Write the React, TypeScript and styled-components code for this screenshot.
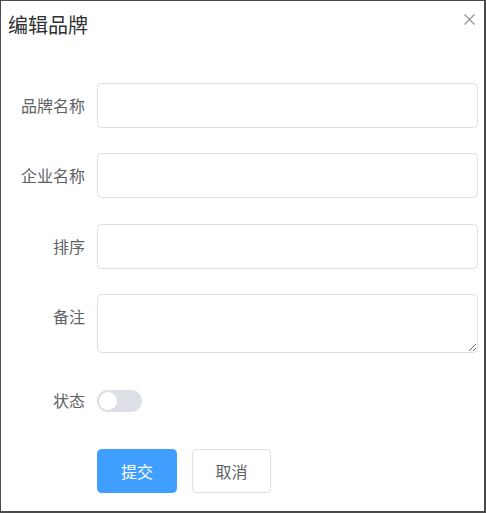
import * as React from 'react';
import styled, { createGlobalStyle } from 'styled-components';

const GlobalStyle = createGlobalStyle`
  html, body {
    margin: 0;
    padding: 0;
    background: #ffffff;
  }
  * {
    box-sizing: border-box;
  }
`;

const Dialog = styled.div`
  width: 486px;
  height: 513px;
  display: flex;
  flex-direction: column;
  background: #fff;
  border-style: solid;
  border-color: #4a4a4a;
  border-width: 1px 2px 2px 1px;
  font-family: "Noto Sans CJK SC", "Microsoft YaHei", sans-serif;
`;

const Header = styled.div`
  display: flex;
  justify-content: space-between;
  align-items: flex-start;
  height: 50px;
  padding: 12px 9px 0 7px;
`;

const Title = styled.span`
  font-size: 20px;
  line-height: 24px;
  color: #303133;
`;

const CloseButton = styled.button`
  margin-top: 1px;
  width: 11px;
  height: 11px;
  padding: 0;
  border: none;
  background: transparent;
  cursor: pointer;
  display: flex;
  color: #909399;
`;

const Body = styled.form`
  display: flex;
  flex-direction: column;
  gap: 25.3px;
  padding: 32px 6px 0 8px;
`;

const Row = styled.div`
  display: flex;
  align-items: flex-start;
`;

const Label = styled.label`
  width: 88px;
  flex-shrink: 0;
  padding-right: 12px;
  text-align: right;
  font-size: 16px;
  line-height: 44px;
  color: #606266;
`;

const Field = styled.div`
  flex: 1;
  display: flex;
  align-items: center;
  gap: 15px;
  min-height: 45px;
`;

const Input = styled.input`
  width: 100%;
  height: 45px;
  border: 1px solid #dcdfe6;
  border-radius: 4.5px;
  padding: 0 16px;
  font-size: 15px;
  font-family: inherit;
  outline: none;
`;

const TextArea = styled.textarea`
  width: 100%;
  height: 59px;
  border: 1px solid #dcdfe6;
  border-radius: 4.5px;
  padding: 6px 16px;
  font-size: 15px;
  font-family: inherit;
  resize: vertical;
  outline: none;
  display: block;
`;

const Switch = styled.span<{ $on: boolean }>`
  position: relative;
  width: 45px;
  height: 22px;
  border-radius: 11px;
  background: ${({ $on }) => ($on ? '#409eff' : '#dcdfe6')};
  cursor: pointer;

  &::after {
    content: '';
    position: absolute;
    top: 2px;
    left: ${({ $on }) => ($on ? '25px' : '2px')};
    width: 18px;
    height: 18px;
    border-radius: 50%;
    background: #fff;
  }
`;

const Button = styled.button<{ $primary?: boolean }>`
  width: ${({ $primary }) => ($primary ? '80px' : '79px')};
  height: 44px;
  border-radius: 4.5px;
  border: 1px solid ${({ $primary }) => ($primary ? '#409eff' : '#dcdfe6')};
  background: ${({ $primary }) => ($primary ? '#409eff' : '#fff')};
  color: ${({ $primary }) => ($primary ? '#fff' : '#606266')};
  font-size: 16px;
  font-family: inherit;
  cursor: pointer;
`;

const CloseIcon = () => (
  <svg width="11" height="11" viewBox="0 0 11 11" fill="none" stroke="currentColor" strokeWidth="1.2">
    <path d="M0.5 0.5 L10.5 10.5 M10.5 0.5 L0.5 10.5" />
  </svg>
);

export default function App() {
  const [status, setStatus] = React.useState(false);

  return (
    <>
      <GlobalStyle />
      <Dialog>
        <Header>
          <Title>编辑品牌</Title>
          <CloseButton aria-label="关闭">
            <CloseIcon />
          </CloseButton>
        </Header>
        <Body onSubmit={(e) => e.preventDefault()}>
          <Row>
            <Label>品牌名称</Label>
            <Field><Input /></Field>
          </Row>
          <Row>
            <Label>企业名称</Label>
            <Field><Input /></Field>
          </Row>
          <Row>
            <Label>排序</Label>
            <Field><Input /></Field>
          </Row>
          <Row>
            <Label>备注</Label>
            <Field><TextArea /></Field>
          </Row>
          <Row>
            <Label>状态</Label>
            <Field>
              <Switch $on={status} onClick={() => setStatus(!status)} />
            </Field>
          </Row>
          <Row>
            <Label />
            <Field>
              <Button $primary type="submit">提交</Button>
              <Button type="button">取消</Button>
            </Field>
          </Row>
        </Body>
      </Dialog>
    </>
  );
}
